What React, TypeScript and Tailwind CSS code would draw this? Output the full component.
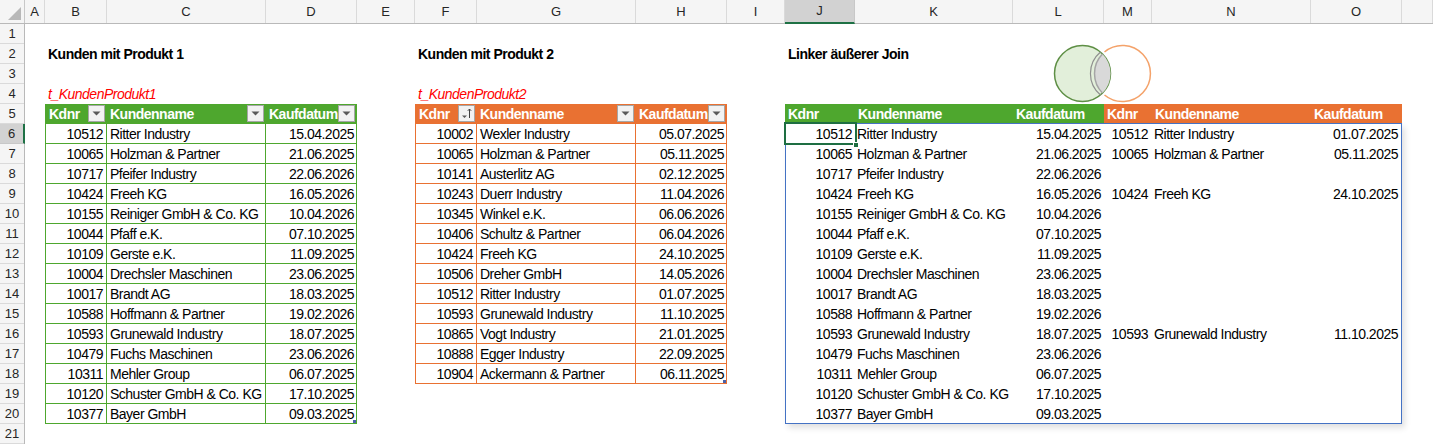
import { Fragment } from "react"

type Row = [string, string, string]

const produkt1: Row[] = [
  ["10512", "Ritter Industry", "15.04.2025"],
  ["10065", "Holzman & Partner", "21.06.2025"],
  ["10717", "Pfeifer Industry", "22.06.2026"],
  ["10424", "Freeh KG", "16.05.2026"],
  ["10155", "Reiniger GmbH & Co. KG", "10.04.2026"],
  ["10044", "Pfaff e.K.", "07.10.2025"],
  ["10109", "Gerste e.K.", "11.09.2025"],
  ["10004", "Drechsler Maschinen", "23.06.2025"],
  ["10017", "Brandt AG", "18.03.2025"],
  ["10588", "Hoffmann & Partner", "19.02.2026"],
  ["10593", "Grunewald Industry", "18.07.2025"],
  ["10479", "Fuchs Maschinen", "23.06.2026"],
  ["10311", "Mehler Group", "06.07.2025"],
  ["10120", "Schuster GmbH & Co. KG", "17.10.2025"],
  ["10377", "Bayer GmbH", "09.03.2025"],
]

const produkt2: Row[] = [
  ["10002", "Wexler Industry", "05.07.2025"],
  ["10065", "Holzman & Partner", "05.11.2025"],
  ["10141", "Austerlitz AG", "02.12.2025"],
  ["10243", "Duerr Industry", "11.04.2026"],
  ["10345", "Winkel e.K.", "06.06.2026"],
  ["10406", "Schultz & Partner", "06.04.2026"],
  ["10424", "Freeh KG", "24.10.2025"],
  ["10506", "Dreher GmbH", "14.05.2026"],
  ["10512", "Ritter Industry", "01.07.2025"],
  ["10593", "Grunewald Industry", "11.10.2025"],
  ["10865", "Vogt Industry", "21.01.2025"],
  ["10888", "Egger Industry", "22.09.2025"],
  ["10904", "Ackermann & Partner", "06.11.2025"],
]

const colLetters = ["A", "B", "C", "D", "E", "F", "G", "H", "I", "J", "K", "L", "M", "N", "O", ""]

// dropdown button in a table header cell
const FilterButton = ({ sorted = false }: { sorted?: boolean }) => (
  <span className="absolute right-[2px] top-[1px] w-[17px] h-[17px] bg-[#f2f2f2] border border-[#a6a6a6] flex items-center justify-center">
    {sorted ? (
      <svg width="13" height="13" viewBox="0 0 13 13">
        <path d="M2 8.5h5l-2.5 2.5z" fill="#595959" />
        <path d="M9.5 2v9M7.8 3.8l1.7-1.8 1.7 1.8" stroke="#404040" strokeWidth="1" fill="none" />
      </svg>
    ) : (
      <svg width="9" height="5" viewBox="0 0 9 5">
        <path d="M0.5 0.5h8l-4 4z" fill="#595959" />
      </svg>
    )}
  </span>
)

const ExcelTable = ({ rows, tone, className }: { rows: Row[]; tone: "green" | "orange"; className: string }) => {
  const border = tone === "green" ? "border-[#4ea72e]" : "border-[#e97132]"
  const head = tone === "green" ? "bg-[#4ea72e]" : "bg-[#e97132]"
  const cell = `border-r border-b ${border} pt-px leading-[19px] whitespace-nowrap overflow-hidden`
  return (
    <div className={`grid grid-cols-subgrid grid-rows-subgrid border-l ${border} ${className}`}>
      <div className={`${head} relative text-white font-bold pt-px leading-[19px] pl-[3px]`}>
        Kdnr
        <FilterButton sorted={tone === "orange"} />
      </div>
      <div className={`${head} relative text-white font-bold pt-px leading-[19px] pl-[3px]`}>
        Kundenname
        <FilterButton />
      </div>
      <div className={`${head} relative text-white font-bold pt-px leading-[19px] pl-[3px]`}>
        Kaufdatum
        <FilterButton />
      </div>
      {rows.map((r, i) => (
        <Fragment key={r[0] + i}>
          <div className={`${cell} text-right pr-[3px]`}>{r[0]}</div>
          <div className={`${cell} pl-[3px]`}>{r[1]}</div>
          <div className={`${cell} text-right pr-[2px] relative`}>
            {r[2]}
            {i === rows.length - 1 && (
              <span className="absolute right-0 bottom-0 w-[3px] h-[3px] bg-[#4a62a8]" />
            )}
          </div>
        </Fragment>
      ))}
    </div>
  )
}

// matches from Produkt 2 for the left outer join
const joinMatch: Record<string, Row> = {}
produkt2.forEach((r) => {
  joinMatch[r[0]] = r
})

const App = () => {
  return (
    <div className="w-[1433px] h-[444px] overflow-hidden bg-white relative text-[14px] tracking-[-0.5px] text-black font-['Liberation_Sans',Arial,sans-serif]">
      <div className="grid grid-cols-[25px_20px_62px_159px_91px_58px_62px_159px_91px_58px_70px_158px_91px_48px_159px_91px_1fr] grid-rows-[24px_repeat(21,20px)] h-full">
        {/* column headers */}
        <div className="col-span-full row-start-1 grid grid-cols-subgrid bg-[#f5f5f5] border-b border-[#b9b9b9] text-[13px] tracking-normal text-[#262626]">
          <div className="border-r border-[#c8c8c8] relative">
            <svg className="absolute right-[3px] bottom-[3px]" width="13" height="13" viewBox="0 0 13 13">
              <path d="M13 0v13H0z" fill="#b8b8b8" />
            </svg>
          </div>
          {colLetters.map((c, i) => (
            <div
              key={i}
              className={
                c === "J"
                  ? "bg-[#d2d2d2] border-r border-[#c8c8c8] border-b-2 border-b-[#1e7145] -mb-px flex items-center justify-center"
                  : "border-r border-[#dadada] flex items-center justify-center"
              }
            >
              {c}
            </div>
          ))}
        </div>

        {/* row headers */}
        <div className="col-start-1 row-start-2 row-span-21 grid grid-rows-subgrid bg-[#f5f5f5] border-r border-[#b9b9b9] text-[13px] tracking-normal text-[#262626]">
          {Array.from({ length: 21 }, (_, i) => (
            <div
              key={i}
              className={
                i === 5
                  ? "bg-[#d2d2d2] border-b border-[#c8c8c8] border-r-2 border-r-[#1e7145] -mr-px flex items-center justify-center"
                  : "border-b border-[#dadada] flex items-center justify-center"
              }
            >
              {i + 1}
            </div>
          ))}
        </div>

        {/* titles */}
        <div className="col-start-3 col-span-3 row-start-3 pl-[3px] font-bold pt-px leading-[19px] whitespace-nowrap">Kunden mit Produkt 1</div>
        <div className="col-start-7 col-span-3 row-start-3 pl-[3px] font-bold pt-px leading-[19px] whitespace-nowrap">Kunden mit Produkt 2</div>
        <div className="col-start-11 col-span-3 row-start-3 pl-[3px] font-bold pt-px leading-[19px] whitespace-nowrap">Linker äußerer Join</div>

        <div className="col-start-3 col-span-3 row-start-5 pl-[3px] italic text-[#ff0000] pt-px leading-[19px]">t_KundenProdukt1</div>
        <div className="col-start-7 col-span-3 row-start-5 pl-[3px] italic text-[#ff0000] pt-px leading-[19px]">t_KundenProdukt2</div>

        <ExcelTable rows={produkt1} tone="green" className="col-start-3 col-end-6 row-start-6 row-end-22" />
        <ExcelTable rows={produkt2} tone="orange" className="col-start-7 col-end-10 row-start-6 row-end-20" />

        {/* join result header */}
        <div className="col-start-11 col-end-17 row-start-6 grid grid-cols-subgrid text-white font-bold leading-[19px]">
          <div className="bg-[#4ea72e] pt-px pl-[3px]">Kdnr</div>
          <div className="bg-[#4ea72e] pt-px pl-[3px]">Kundenname</div>
          <div className="bg-[#4ea72e] pt-px pl-[3px]">Kaufdatum</div>
          <div className="bg-[#e97132] pt-px pl-[3px]">Kdnr</div>
          <div className="bg-[#e97132] pt-px pl-[3px]">Kundenname</div>
          <div className="bg-[#e97132] pt-px pl-[3px]">Kaufdatum</div>
        </div>

        {/* join result body (pasted picture) */}
        <div className="col-start-11 col-end-17 row-start-7 row-end-22 grid grid-cols-subgrid grid-rows-subgrid relative leading-[19px]">
          <div className="absolute -top-px left-0 right-0 bottom-0 border border-[#4472c4] shadow-[3px_4px_6px_rgba(0,0,0,0.12)] pointer-events-none" />
          {produkt1.map((r, i) => {
            const m = joinMatch[r[0]]
            return (
              <Fragment key={r[0]}>
                <div className="pt-px text-right pr-[3px] relative">
                  {r[0]}
                  {i === 0 && (
                    <>
                      <span className="absolute -left-px -top-[2px] -right-[2px] -bottom-px border-2 border-[#1e6e42]" />
                      <span className="absolute -right-[4px] -bottom-[4px] w-[6px] h-[6px] bg-[#1e6e42] border border-white" />
                    </>
                  )}
                </div>
                <div className="pt-px pl-[2px] whitespace-nowrap">{r[1]}</div>
                <div className="pt-px text-right pr-[3px]">{r[2]}</div>
                <div className="pt-px text-right pr-[4px]">{m ? m[0] : ""}</div>
                <div className="pt-px pl-[2px] whitespace-nowrap">{m ? m[1] : ""}</div>
                <div className="pt-px text-right pr-[4px]">{m ? m[2] : ""}</div>
              </Fragment>
            )
          })}
        </div>
      </div>

      {/* venn diagram shape */}
      <svg className="absolute left-[1050px] top-[42px]" width="106" height="64" viewBox="0 0 106 64">
        <defs>
          <clipPath id="greenClip">
            <circle cx="32.5" cy="31.5" r="28" />
          </clipPath>
        </defs>
        <circle cx="32.5" cy="31.5" r="28" fill="#e2efda" stroke="#5e8f45" strokeWidth="1.5" />
        <circle cx="72.5" cy="31.5" r="28" fill="#d9d9d9" stroke="#a5a5a5" strokeWidth="1.5" clipPath="url(#greenClip)" />
        <path d="M54.5 10 A28 28 0 1 1 54.5 53" fill="none" stroke="#f4a26a" strokeWidth="1.5" />
        <path d="M50.5 10 A28 28 0 0 0 50.5 53" fill="none" stroke="#8f8f8f" strokeWidth="1.2" />
      </svg>
    </div>
  )
}

export default App
